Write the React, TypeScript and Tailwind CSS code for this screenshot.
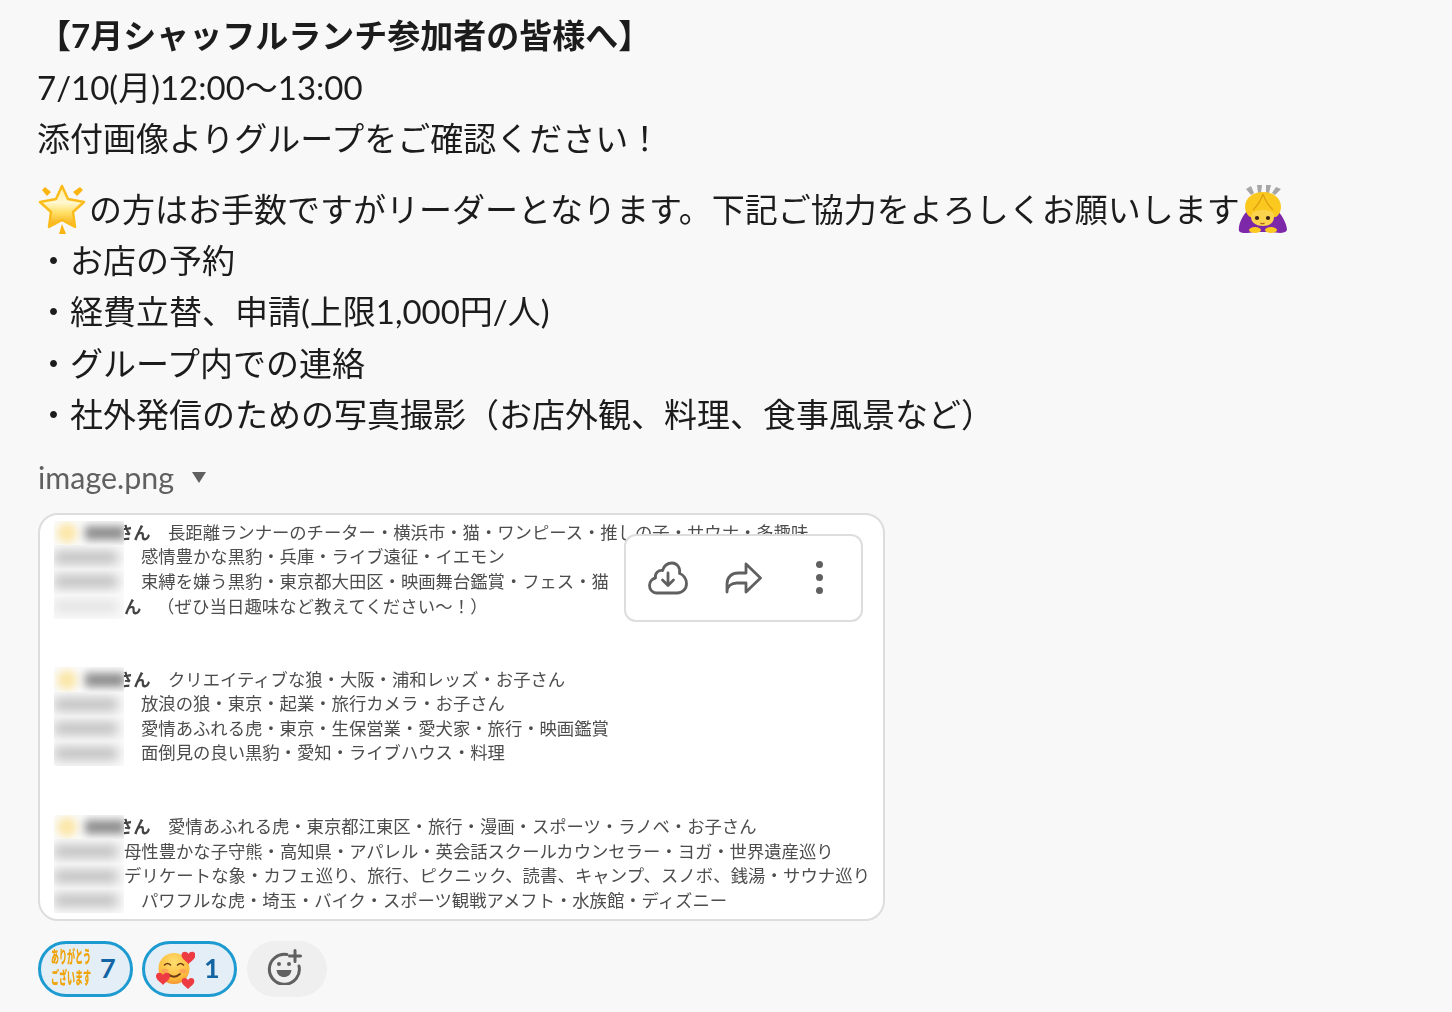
import React from "react";

const font = { fontFamily: '"Lato","Noto Sans CJK JP",sans-serif' };

function Star({ className }: { className?: string }) {
  return (
    <svg viewBox="0 0 60 60" className={className}>
      <defs>
        <linearGradient id="st" x1="0" y1="0" x2="0" y2="1">
          <stop offset="0" stopColor="#ffeb99" />
          <stop offset="0.4" stopColor="#fff8d2" />
          <stop offset="0.65" stopColor="#ffe066" />
          <stop offset="1" stopColor="#f8a80e" />
        </linearGradient>
      </defs>
      <path d="M28 6 L34 19 L50 22 L39 32 L41 47 L28 40 L15 47 L17 32 L6 22 L22 19 Z" fill="url(#st)" stroke="#fbbc1e" strokeWidth="2.5" strokeLinejoin="round" />
      <path d="M11 7 L17 12 L13 16 L8 10 Z M46 7 L49 10 L43 16 L39 12 Z M28 44 L32 54 L25 54 Z" fill="#fbb511" />
    </svg>
  );
}

function Bow({ className }: { className?: string }) {
  return (
    <svg viewBox="0 0 60 60" className={className}>
      <path d="M13 9 L18 6 L21 13 L18 15 Z M24 5 L29 5 L28 13 L25 13 Z M33 5 L38 5 L36 13 L33 13 Z M43 7 L48 9 L42 15 L39 13 Z" fill="#a6a6a6" />
      <path d="M15 30 C8 37 5 46 6 51 C8 54 15 53 22 52 L38 52 C45 53 52 54 54 50 C54 45 50 36 44 30 L38 42 L22 42 Z" fill="#7c28a8" />
      <path d="M12 27 C12 18 20 12 30 12 C40 12 48 18 48 27 C48 31 46 35 43 37 L17 37 C14 35 12 31 12 27 Z" fill="#fbc81f" />
      <path d="M30 14 C28 20 26 24 20 30 M30 14 C32 20 34 24 40 30" stroke="#dfa010" strokeWidth="1.2" fill="none" />
      <path d="M18 37 C18 32 23 30 30 30 C37 30 41 32 41 37 C41 43 36 46 30 46 C24 46 18 43 18 37 Z" fill="#fcd34d" />
      <circle cx="24" cy="38" r="2.1" fill="#3b2314" />
      <circle cx="35" cy="38" r="2.1" fill="#3b2314" />
      <path d="M27.5 43 Q29.5 44.5 31.5 43" stroke="#a5591a" strokeWidth="1.2" fill="none" />
      <ellipse cx="22" cy="50" rx="6" ry="3" fill="#fbc91f" />
      <ellipse cx="38" cy="50" rx="6" ry="3" fill="#fbc91f" />
    </svg>
  );
}

function Hearts({ className }: { className?: string }) {
  const heart = "M0 -2 C-1.5 -5.5 -7 -5 -7 -1 C-7 3 -2 5.5 0 8 C2 5.5 7 3 7 -1 C7 -5 1.5 -5.5 0 -2 Z";
  return (
    <svg viewBox="0 0 40 40" className={className}>
      <defs>
        <radialGradient id="fc" cx="0.5" cy="0.3" r="0.75">
          <stop offset="0" stopColor="#ffdf70" />
          <stop offset="0.7" stopColor="#fdbb3d" />
          <stop offset="1" stopColor="#f38a2c" />
        </radialGradient>
      </defs>
      <circle cx="19" cy="19.5" r="15.5" fill="url(#fc)" />
      <ellipse cx="10" cy="22" rx="3.5" ry="2.2" fill="#f9875d" opacity="0.5" />
      <ellipse cx="28" cy="22" rx="3.5" ry="2.2" fill="#f9875d" opacity="0.5" />
      <path d="M9.5 16 Q12.5 13 15.5 16 M22.5 16 Q25.5 13 28.5 16" stroke="#6b3a16" strokeWidth="1.6" fill="none" strokeLinecap="round" />
      <path d="M13 25 Q19 30.5 25 25" stroke="#6b3a16" strokeWidth="1.8" fill="none" strokeLinecap="round" />
      <g fill="#ee3a43">
        <path d={heart} transform="translate(33.5 7)" />
        <path d={heart} transform="translate(8 28)" />
        <path d={heart} transform="translate(33 33) scale(0.9)" />
      </g>
    </svg>
  );
}

function Blur({ tone = "bg-[#bdbdbd]" }: { tone?: string }) {
  return <span className={`block h-[13px] w-[64px] blur-[6px] ${tone}`} />;
}

function Cell({ children }: { children: React.ReactNode }) {
  return (
    <div className="relative z-10 flex h-full w-[70px] shrink-0 items-center overflow-hidden bg-[#fbfbfb]">
      {children}
    </div>
  );
}

function Lead() {
  return (
    <div className="flex w-[70px] items-center gap-[8px] pl-[3px]">
      <span className="block h-[20px] w-[20px] shrink-0 rounded-full bg-[#fbe6a6] blur-[4px]" />
      <span className="block h-[14px] w-[40px] shrink-0 bg-[#8e8e8e] blur-[4px]" />
    </div>
  );
}

type R = { t: string; c?: string; tone?: string; kana?: boolean };

function Group({ rows }: { rows: R[] }) {
  return (
    <div className="flex flex-col">
      {rows.map((r, i) => (
        <div key={i} className="flex h-[24.6px] items-center whitespace-nowrap">
          <Cell>{i === 0 ? <Lead /> : <Blur tone={r.tone} />}</Cell>
          {i === 0 ? (
            <>
              <b className="-ml-[8px] w-[34px] shrink-0 font-bold text-[#444444]">さん</b>
              <span className="ml-[18px]">{r.t}</span>
            </>
          ) : r.kana ? (
            <>
              <b className="w-[17px] shrink-0 font-bold text-[#444444]">ん</b>
              <span className={r.c}>{r.t}</span>
            </>
          ) : (
            <span className={r.c}>{r.t}</span>
          )}
        </div>
      ))}
    </div>
  );
}

export default function App() {
  const line = "h-[51.5px] leading-[51.5px] whitespace-nowrap";
  return (
    <div style={font} className="h-[1012px] w-[1452px] overflow-hidden bg-[#f8f8f8] pl-[38px] pt-[10px] text-[33px] text-[#1d1c1d]">
      <div className="blur-[0.4px]">
        <div className="-ml-px">
          <div className={`${line} ml-px font-bold`}>【7月シャッフルランチ参加者の皆様へ】</div>
          <div className={line}>7/10(月)12:00〜13:00</div>
          <div className={line}>添付画像よりグループをご確認ください！</div>
          <div className={`${line} mt-[18.5px] flex items-center`}>
            <Star className="-ml-[3px] -mr-[5px] mt-[2px] h-[60px] w-[60px] shrink-0" />
            <span className="mt-px">の方はお手数ですがリーダーとなります。下記ご協力をよろしくお願いします</span>
            <Bow className="-ml-[7px] mt-[2px] h-[60px] w-[60px] shrink-0" />
          </div>
          <div className={line}>・お店の予約</div>
          <div className={line}>・経費立替、申請(上限1,000円/人)</div>
          <div className={line}>・グループ内での連絡</div>
          <div className={line}>・社外発信のための写真撮影（お店外観、料理、食事風景など）</div>
        </div>

        <div className="mt-[15px] flex h-[44px] items-center text-[30.4px] text-[#616061]">
          <span>image.png</span>
          <svg viewBox="0 0 14 11" className="ml-[18px] h-[11px] w-[14px]">
            <path d="M0 0 H14 L7 11 Z" fill="#616061" />
          </svg>
        </div>

        <div className="relative mt-[13px] h-[408px] w-[847px] overflow-hidden rounded-[20px] border-2 border-[#dddddd] bg-white pl-[14px] pt-[6px] text-[17.33px] text-[#4d4d4d]">
          <div className="blur-[0.3px]">
            <Group
              rows={[
                { t: "長距離ランナーのチーター・横浜市・猫・ワンピース・推しの子・サウナ・多趣味", c: "" },
                { t: "感情豊かな黒豹・兵庫・ライブ遠征・イエモン", c: "ml-[17px]" },
                { t: "束縛を嫌う黒豹・東京都大田区・映画舞台鑑賞・フェス・猫", c: "ml-[17px]" },
                { t: "（ぜひ当日趣味など教えてください〜！）", c: "ml-[16px] tracking-[0.15px]", tone: "bg-[#e2e2e2]", kana: true },
              ]}
            />
            <div className="mt-[48.5px]">
              <Group
                rows={[
                  { t: "クリエイティブな狼・大阪・浦和レッズ・お子さん", c: "" },
                  { t: "放浪の狼・東京・起業・旅行カメラ・お子さん", c: "ml-[17px]" },
                  { t: "愛情あふれる虎・東京・生保営業・愛犬家・旅行・映画鑑賞", c: "ml-[17px]" },
                  { t: "面倒見の良い黒豹・愛知・ライブハウス・料理", c: "ml-[17px]" },
                ]}
              />
            </div>
            <div className="mt-[49px]">
              <Group
                rows={[
                  { t: "愛情あふれる虎・東京都江東区・旅行・漫画・スポーツ・ラノベ・お子さん", c: "" },
                  { t: "母性豊かな子守熊・高知県・アパレル・英会話スクールカウンセラー・ヨガ・世界遺産巡り", c: "" },
                  { t: "デリケートな象・カフェ巡り、旅行、ピクニック、読書、キャンプ、スノボ、銭湯・サウナ巡り", c: "tracking-[0.1px]" },
                  { t: "パワフルな虎・埼玉・バイク・スポーツ観戦アメフト・水族館・ディズニー", c: "ml-[17px]" },
                ]}
              />
            </div>
          </div>

          <div className="absolute left-[584px] top-[19px] z-20 flex h-[88px] w-[239px] items-center rounded-[12px] border-2 border-[#dddddd] bg-white pl-[22px]">
            <svg viewBox="0 0 40 34" className="h-[34px] w-[40px] shrink-0" fill="none" stroke="#616061" strokeWidth="2.8" strokeLinecap="round" strokeLinejoin="round">
              <path d="M9 32 C4 32 1.5 28 1.5 24.5 C1.5 20.5 4.5 17.5 7.5 17 C6.5 12 10.5 9 14.5 9.5 C16 4.5 20 2 24 2 C29.5 2 32.5 7 31.5 12.5 C35.5 13.5 38.5 18 38.5 22.5 C38.5 28 34.5 32 29 32 Z" />
              <path d="M20 12 V24 M14.5 19 L20 24.5 L25.5 19" />
            </svg>
            <svg viewBox="0 0 37 32" className="ml-[37px] h-[32px] w-[37px] shrink-0" fill="none" stroke="#616061" strokeWidth="2.8" strokeLinejoin="round" strokeLinecap="round">
              <path d="M2 30 V22 C2 15 7 11 13 11 H21 V2 L35.5 16 L21 30 V21 H12 C6.5 21 2 24 2 30 Z" />
            </svg>
            <div className="ml-[54px] flex flex-col gap-[6px]">
              <span className="h-[7px] w-[7px] rounded-full bg-[#616061]" />
              <span className="h-[7px] w-[7px] rounded-full bg-[#616061]" />
              <span className="h-[7px] w-[7px] rounded-full bg-[#616061]" />
            </div>
          </div>
        </div>

        <div className="mt-[20px] flex gap-[9px]">
          <div className="flex h-[56px] w-[95px] items-center rounded-full border-[3px] border-[#1d9bd1] bg-[#e3eef6] pl-[10px] text-[27px] font-bold text-[#1264a3]">
            <div className="flex w-[40px] shrink-0 origin-center scale-y-[2.1] flex-col text-[8px] font-black leading-[9.5px] text-[#f0a30a]">
              <span>ありがとう</span>
              <span>ございます</span>
            </div>
            <span className="ml-[9px]">7</span>
          </div>
          <div className="flex h-[56px] w-[95px] items-center rounded-full border-[3px] border-[#1d9bd1] bg-[#e3eef6] pl-[10px] text-[27px] font-bold text-[#1264a3]">
            <Hearts className="h-[40px] w-[40px] shrink-0" />
            <span className="ml-[9px]">1</span>
          </div>
          <div className="ml-px flex h-[56px] w-[80px] items-center justify-center rounded-full bg-[#efefef]">
            <svg viewBox="0 0 36 36" className="-ml-[4px] -mt-[3px] h-[36px] w-[36px]" fill="none" stroke="#616061" strokeWidth="3" strokeLinecap="round">
              <path d="M20 5.5 A15 15 0 1 0 32 17" />
              <path d="M28 1.5 V12.5 M22.5 7 H33.5" />
              <circle cx="12" cy="15" r="2" fill="#616061" stroke="none" />
              <circle cx="22" cy="15" r="2" fill="#616061" stroke="none" />
              <path d="M9.5 21 H24.5 C24 25.5 21 28 17 28 C13 28 10 25.5 9.5 21 Z" fill="#616061" stroke="none" />
            </svg>
          </div>
        </div>
      </div>
    </div>
  );
}
